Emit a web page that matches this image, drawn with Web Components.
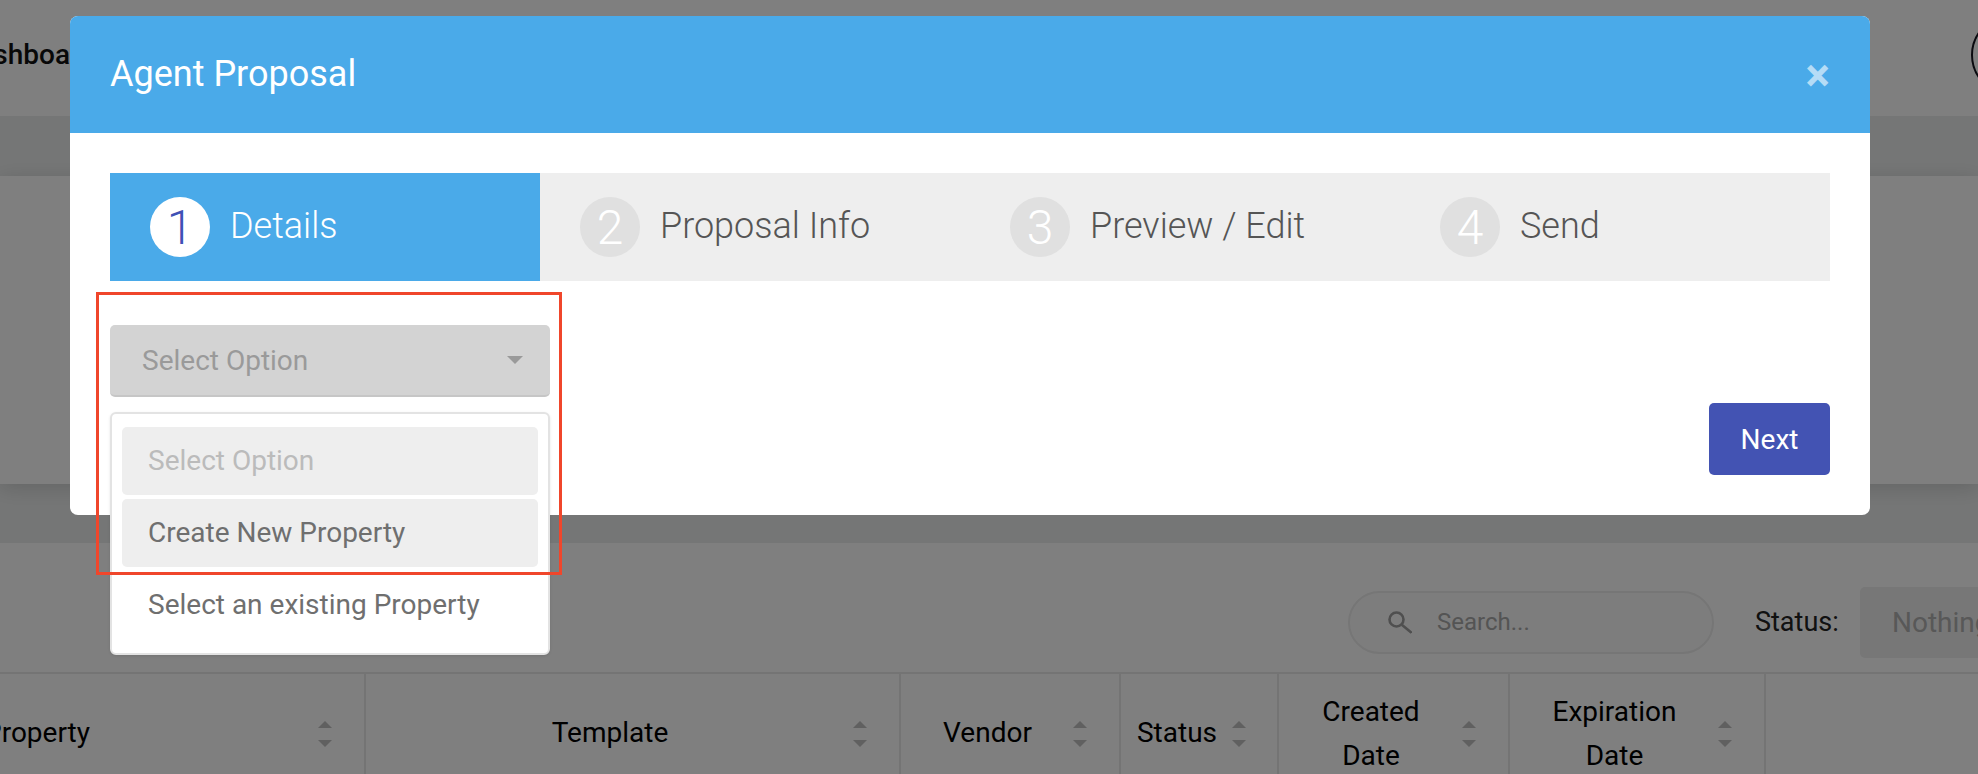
<!DOCTYPE html>
<html>
<head>
<meta charset="utf-8">
<title>Agent Proposal</title>
<style>
    html, body { margin: 0; height: 100%; }
    body { width: 1978px; height: 774px; overflow: hidden; font-family: Roboto, "Liberation Sans", sans-serif; position: relative; background: #fff; }
</style>
</head>
<body>
<dash-page></dash-page>
<modal-backdrop></modal-backdrop>
<proposal-modal title-text="Agent Proposal">
    <step-item num="1" active>Details</step-item>
    <step-item num="2">Proposal Info</step-item>
    <step-item num="3">Preview / Edit</step-item>
    <step-item num="4">Send</step-item>
</proposal-modal>

<script>
class DashPage extends HTMLElement {
    constructor() {
        super();
        this.attachShadow({ mode: 'open' });
    }

    connectedCallback() {
        const cols = [
            { w: 366, label: 'Property', sort: 325 },
            { w: 535, label: 'Template', sort: 860 },
            { w: 220, label: 'Vendor', sort: 1080 },
            { w: 158, label: 'Status', sort: 1239 },
            { w: 231, label: 'Created<br>Date', sort: 1469 },
            { w: 256, label: 'Expiration<br>Date', sort: 1725 }
        ];
        let left = 0;
        const ths = cols.map((c) => {
            const start = left;
            left += c.w;
            const two = c.label.includes('<br>') ? 'two' : '';
            const place = c.label === 'Property' ? 'right:274px' : `left:0;width:${c.sort - start - 6}px;text-align:center`;
            return `<div class="th ${two}" style="width:${c.w}px">
                <span class="label" style="${place}">${c.label}</span>
                <sort-arrows style="left:${c.sort - start - 7}px"></sort-arrows>
            </div>`;
        }).join('');

        this.shadowRoot.innerHTML = `
            <style>
                :host { display: flex; flex-direction: column; width: 1978px; height: 774px; overflow: hidden; background: #ebeded; color: #000; }
                .top { height: 116px; background: #fff; display: flex; align-items: center; flex: none; position: relative; }
                .brand { font-size: 28px; font-weight: 500; color: #111; margin-left: -40px; margin-top: -8px; }
                .avatar { position: absolute; left: 1971px; top: 15px; width: 80px; height: 80px; box-sizing: border-box; border: 2.5px solid #15151f; border-radius: 50%; }
                .gap1 { height: 60px; flex: none; }
                .card1 { height: 308px; background: #fff; flex: none; box-shadow: 0 4px 20px rgba(0,0,0,.15); }
                .gap2 { height: 59px; flex: none; }
                .card2 { flex: 1; background: #fff; display: flex; flex-direction: column; }
                .tools { height: 131px; flex: none; display: flex; align-items: center; padding: 29px 0 0 1348px; box-sizing: border-box; border-bottom: 2px solid #e8e8e8; }
                .search { width: 366px; height: 63px; box-sizing: border-box; border: 2px solid #ececec; background: #fbfbfb; border-radius: 32px; display: flex; align-items: center; padding-left: 38px; flex: none; }
                .search svg { width: 24px; height: 24px; flex: none; }
                .search span { margin-left: 25px; font-size: 24px; color: #a8a8a8; }
                .status { margin-left: 41px; font-size: 27px; color: #222; flex: none; width: 105px; }
                .picker { width: 200px; height: 71px; background: #eee; border-radius: 5px; flex: none; box-sizing: border-box; padding-left: 32px; line-height: 71px; font-size: 28px; color: #b0b0b0; white-space: nowrap; overflow: hidden; }
                .thead { display: flex; height: 200px; }
                .th { position: relative; flex: none; box-sizing: border-box; border-right: 2px solid #e8e8e8; font-size: 28px; }
                .label { position: absolute; top: 37px; line-height: 44px; color: #000; }
                .two .label { top: 16px; }
            </style>
            <div class="top">
                <span class="brand">Dashboard</span>
                <div class="avatar"></div>
            </div>
            <div class="gap1"></div>
            <div class="card1"></div>
            <div class="gap2"></div>
            <div class="card2">
                <div class="tools">
                    <div class="search">
                        <svg viewBox="0 0 24 24" fill="none" stroke="#9e9e9e" stroke-width="2.6"><circle cx="8.5" cy="9.5" r="7"/><path d="M13.8 14.8 23.5 22.8"/></svg>
                        <span>Search...</span>
                    </div>
                    <span class="status">Status:</span>
                    <div class="picker">Nothing selected</div>
                </div>
                <div class="thead">${ths}</div>
            </div>
        `;
    }
}

class SortArrows extends HTMLElement {
    constructor() {
        super();
        this.attachShadow({ mode: 'open' });
        this.shadowRoot.innerHTML = `
            <style>
                :host { position: absolute; top: 47px; width: 14px; height: 26px; display: flex; flex-direction: column; justify-content: space-between; }
                i { display: block; width: 0; height: 0; border-left: 7px solid transparent; border-right: 7px solid transparent; }
                .up { border-bottom: 7px solid #c0c0c0; }
                .down { border-top: 7px solid #c0c0c0; }
            </style>
            <i class="up"></i>
            <i class="down"></i>
        `;
    }
}

class ModalBackdrop extends HTMLElement {
    constructor() {
        super();
        this.attachShadow({ mode: 'open' });
        this.shadowRoot.innerHTML = `
            <style>
                :host { display: block; position: absolute; inset: 0; background: rgba(0,0,0,.5); }
            </style>
        `;
    }
}

class StepItem extends HTMLElement {
    constructor() {
        super();
        this.attachShadow({ mode: 'open' });
    }

    connectedCallback() {
        const num = this.getAttribute('num');
        this.shadowRoot.innerHTML = `
            <style>
                :host { display: flex; align-items: center; flex: 1; padding-left: 40px; box-sizing: border-box; font-weight: 300; font-size: 36px; color: #555; background: #eee; }
                :host([active]) { background: #4aaae9; color: #fff; }
                .num { width: 60px; height: 60px; border-radius: 50%; background: #e0e0e0; color: #fff; display: flex; align-items: center; justify-content: center; font-size: 48px; margin-right: 20px; flex: none; }
                :host([active]) .num { background: #fff; color: #3f51b5; }
                .txt { margin-top: -3px; }
            </style>
            <span class="num">${num}</span>
            <span class="txt"><slot></slot></span>
        `;
    }
}

class SelectBox extends HTMLElement {
    constructor() {
        super();
        this.attachShadow({ mode: 'open' });
        this.shadowRoot.innerHTML = `
            <style>
                :host { display: block; position: relative; width: 440px; height: 72px; }
                .btn { height: 72px; box-sizing: border-box; background: #d3d3d3; border-bottom: 2px solid #c6c6c6; border-radius: 5px; display: flex; align-items: center; justify-content: space-between; padding: 0 27px 0 32px; font-size: 28px; color: #9a9a9a; }
                .caret { width: 0; height: 0; border-left: 8px solid transparent; border-right: 8px solid transparent; border-top: 8px solid #9a9a9a; }
                .menu { position: absolute; left: 0; top: 87px; width: 440px; height: 243px; box-sizing: border-box; background: #fff; border: 2px solid #e3e3e3; border-radius: 6px; padding: 13px 10px; box-shadow: 0 1px 3px rgba(0,0,0,.1); z-index: 1; }
                .opt { height: 68px; line-height: 68px; margin-bottom: 4px; padding-left: 26px; border-radius: 5px; font-size: 28px; color: #6f6f6f; }
                .opt.on { background: #eee; }
                .opt.off { color: #bbb; }
            </style>
            <div class="btn">
                <span>Select Option</span>
                <span class="caret"></span>
            </div>
            <div class="menu">
                <div class="opt on off">Select Option</div>
                <div class="opt on">Create New Property</div>
                <div class="opt">Select an existing Property</div>
            </div>
        `;
    }
}

class ProposalModal extends HTMLElement {
    constructor() {
        super();
        this.attachShadow({ mode: 'open' });
    }

    connectedCallback() {
        this.shadowRoot.innerHTML = `
            <style>
                :host { display: block; position: absolute; left: 70px; top: 16px; width: 1800px; height: 499px; background: #fff; border-radius: 8px; }
                .head { height: 117px; background: #4aaae9; border-radius: 8px 8px 0 0; display: flex; align-items: center; justify-content: space-between; padding: 0 40px; color: #fff; }
                h4 { margin: 0; font-size: 36px; font-weight: 400; margin-top: -2px; }
                .close { font-size: 46px; font-weight: 700; line-height: 1; color: rgba(255,255,255,.6); margin-right: 0; }
                .body { padding: 40px 40px 0; position: relative; }
                .steps { display: flex; height: 108px; }
                .row { display: flex; justify-content: space-between; align-items: flex-start; padding-top: 44px; position: relative; }
                .next { width: 121px; height: 72px; margin-top: 78px; background: #4353b3; color: #fff; border-radius: 5px; display: flex; align-items: center; justify-content: center; font-size: 28px; }
                .mark { position: absolute; left: 26px; top: 159px; width: 466px; height: 283px; box-sizing: border-box; border: 3px solid #f0462b; z-index: 2; pointer-events: none; }
            </style>
            <div class="head">
                <h4>${this.getAttribute('title-text')}</h4>
                <span class="close">×</span>
            </div>
            <div class="body">
                <div class="steps"><slot></slot></div>
                <div class="row">
                    <select-box></select-box>
                    <div class="next">Next</div>
                </div>
                <div class="mark"></div>
            </div>
        `;
    }
}

customElements.define('sort-arrows', SortArrows);
customElements.define('dash-page', DashPage);
customElements.define('modal-backdrop', ModalBackdrop);
customElements.define('step-item', StepItem);
customElements.define('select-box', SelectBox);
customElements.define('proposal-modal', ProposalModal);
</script>
</body>
</html>
